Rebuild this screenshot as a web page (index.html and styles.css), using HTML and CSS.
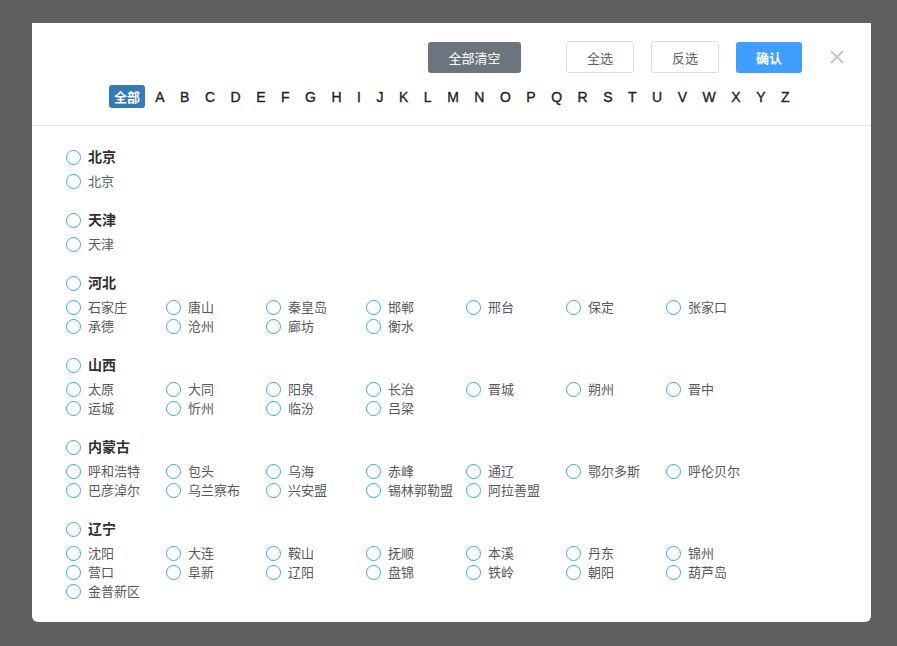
FILE: index.html
```html
<!DOCTYPE html>
<html lang="zh-CN">
<head>
<meta charset="utf-8">
<title>城市选择</title>
<link rel="stylesheet" href="styles.css">
</head>
<body>
<div class="modal">
  <div class="head">
    <div class="actions">
      <button class="btn btn-clear">全部清空</button>
      <button class="btn btn-plain">全选</button>
      <button class="btn btn-plain">反选</button>
      <button class="btn btn-ok">确认</button>
      <span class="close"><svg width="14" height="14" viewBox="0 0 14 14"><path d="M1 1L13 13M13 1L1 13" stroke="#c4c4c4" stroke-width="1.8" fill="none"/></svg></span>
    </div>
    <div class="letters">
      <span class="all">全部</span>
      <span class="l">A</span><span class="l">B</span><span class="l">C</span><span class="l">D</span><span class="l">E</span><span class="l">F</span><span class="l">G</span><span class="l">H</span><span class="l">I</span><span class="l">J</span><span class="l">K</span><span class="l">L</span><span class="l">M</span><span class="l">N</span><span class="l">O</span><span class="l">P</span><span class="l">Q</span><span class="l">R</span><span class="l">S</span><span class="l">T</span><span class="l">U</span><span class="l">V</span><span class="l">W</span><span class="l">X</span><span class="l">Y</span><span class="l">Z</span>
    </div>
  </div>
  <div class="body">
    <div class="group">
      <div class="prov"><i class="radio"></i>北京</div>
      <div class="cities"><div class="city"><i class="radio"></i>北京</div></div>
    </div>
    <div class="group">
      <div class="prov"><i class="radio"></i>天津</div>
      <div class="cities"><div class="city"><i class="radio"></i>天津</div></div>
    </div>
    <div class="group">
      <div class="prov"><i class="radio"></i>河北</div>
      <div class="cities">
        <div class="city"><i class="radio"></i>石家庄</div><div class="city"><i class="radio"></i>唐山</div><div class="city"><i class="radio"></i>秦皇岛</div><div class="city"><i class="radio"></i>邯郸</div><div class="city"><i class="radio"></i>邢台</div><div class="city"><i class="radio"></i>保定</div><div class="city"><i class="radio"></i>张家口</div>
        <div class="city"><i class="radio"></i>承德</div><div class="city"><i class="radio"></i>沧州</div><div class="city"><i class="radio"></i>廊坊</div><div class="city"><i class="radio"></i>衡水</div>
      </div>
    </div>
    <div class="group">
      <div class="prov"><i class="radio"></i>山西</div>
      <div class="cities">
        <div class="city"><i class="radio"></i>太原</div><div class="city"><i class="radio"></i>大同</div><div class="city"><i class="radio"></i>阳泉</div><div class="city"><i class="radio"></i>长治</div><div class="city"><i class="radio"></i>晋城</div><div class="city"><i class="radio"></i>朔州</div><div class="city"><i class="radio"></i>晋中</div>
        <div class="city"><i class="radio"></i>运城</div><div class="city"><i class="radio"></i>忻州</div><div class="city"><i class="radio"></i>临汾</div><div class="city"><i class="radio"></i>吕梁</div>
      </div>
    </div>
    <div class="group">
      <div class="prov"><i class="radio"></i>内蒙古</div>
      <div class="cities">
        <div class="city"><i class="radio"></i>呼和浩特</div><div class="city"><i class="radio"></i>包头</div><div class="city"><i class="radio"></i>乌海</div><div class="city"><i class="radio"></i>赤峰</div><div class="city"><i class="radio"></i>通辽</div><div class="city"><i class="radio"></i>鄂尔多斯</div><div class="city"><i class="radio"></i>呼伦贝尔</div>
        <div class="city"><i class="radio"></i>巴彦淖尔</div><div class="city"><i class="radio"></i>乌兰察布</div><div class="city"><i class="radio"></i>兴安盟</div><div class="city"><i class="radio"></i>锡林郭勒盟</div><div class="city"><i class="radio"></i>阿拉善盟</div>
      </div>
    </div>
    <div class="group">
      <div class="prov"><i class="radio"></i>辽宁</div>
      <div class="cities">
        <div class="city"><i class="radio"></i>沈阳</div><div class="city"><i class="radio"></i>大连</div><div class="city"><i class="radio"></i>鞍山</div><div class="city"><i class="radio"></i>抚顺</div><div class="city"><i class="radio"></i>本溪</div><div class="city"><i class="radio"></i>丹东</div><div class="city"><i class="radio"></i>锦州</div>
        <div class="city"><i class="radio"></i>营口</div><div class="city"><i class="radio"></i>阜新</div><div class="city"><i class="radio"></i>辽阳</div><div class="city"><i class="radio"></i>盘锦</div><div class="city"><i class="radio"></i>铁岭</div><div class="city"><i class="radio"></i>朝阳</div><div class="city"><i class="radio"></i>葫芦岛</div>
        <div class="city"><i class="radio"></i>金普新区</div>
      </div>
    </div>
  </div>
</div>
</body>
</html>
```

FILE: styles.css
```css
html, body {
  margin: 0;
  padding: 0;
  background: #5f5f5f;
  font-family: "Liberation Sans", "Noto Sans CJK SC", sans-serif;
}
body {
  padding: 23px 0 0 32px;
  height: 646px;
  box-sizing: border-box;
  overflow: hidden;
}
.modal {
  width: 839px;
  height: 599px;
  background: #fff;
  border-radius: 0 0 6px 6px;
  box-sizing: border-box;
}
.head {
  border-bottom: 1px solid #e5e5e5;
  padding-bottom: 17px;
}
.actions {
  display: flex;
  justify-content: flex-end;
  align-items: center;
  padding: 18px 27px 0 0;
}
.btn {
  font-family: "Noto Sans CJK SC", sans-serif;
  font-size: 13px;
  height: 31px;
  border-radius: 3px;
  padding: 0;
  cursor: pointer;
  box-sizing: border-box;
}
.btn-clear {
  width: 93px;
  background: #6c757d;
  border: none;
  color: #fff;
  margin-right: 45px;
}
.btn-plain {
  width: 68px;
  height: 32px;
  background: #fff;
  border: 1px solid #dcdfe6;
  color: #606266;
  margin-right: 17px;
}
.btn-ok {
  width: 66px;
  background: #409eff;
  border: none;
  color: #fff;
  font-weight: 700;
  margin-right: 28px;
}
.close {
  width: 14px;
  height: 14px;
  display: flex;
}
.letters {
  display: flex;
  justify-content: flex-start;
  align-items: center;
  margin-top: 12px;
  height: 23px;
  padding-left: 77px;
}
.all {
  font-family: "Noto Sans CJK SC", sans-serif;
  font-weight: 700;
  font-size: 13px;
  color: #fff;
  background: #337ab7;
  border-radius: 3px;
  width: 36px;
  height: 23px;
  line-height: 23px;
  text-align: center;
  margin-right: 2.5px;
}
.l {
  font-size: 14px;
  font-weight: 400;
  color: #222;
  padding: 0 7.75px;
  line-height: 22px;
  -webkit-text-stroke: 0.35px #222;
}
.body {
  padding: 20px 0 0 34px;
}
.group {
  margin-bottom: 20px;
}
.prov, .city {
  display: flex;
  align-items: center;
  font-family: "Noto Sans CJK SC", sans-serif;
}
.prov {
  height: 20px;
  margin-bottom: 5px;
  font-size: 14px;
  font-weight: 700;
  color: #303133;
}
.cities {
  display: grid;
  grid-template-columns: repeat(7, 100px);
  grid-auto-rows: 19px;
  margin-bottom: -1px;
}
.city {
  font-size: 13px;
  color: #555a60;
  white-space: nowrap;
}
.radio {
  width: 15px;
  height: 15px;
  border: 1.6px solid #3aa5ef;
  border-radius: 50%;
  box-sizing: border-box;
  margin: 2px 7px 0 0;
  flex: none;
}
```
